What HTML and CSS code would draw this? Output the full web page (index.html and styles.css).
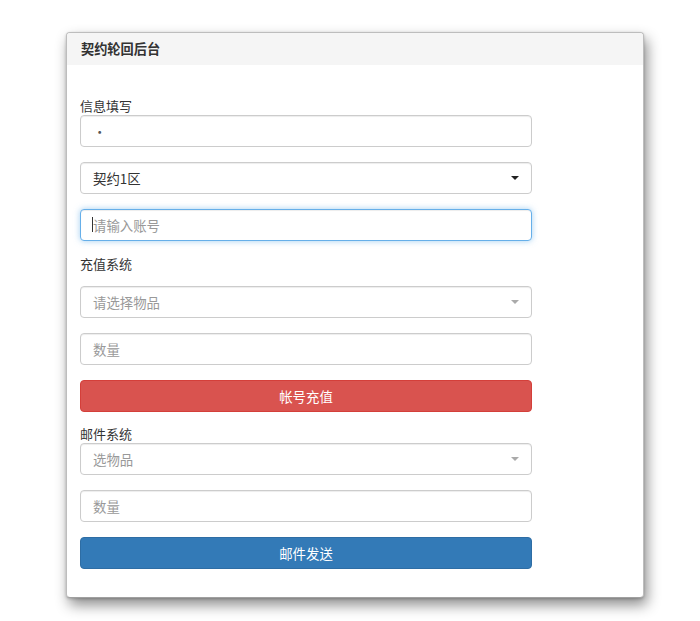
FILE: index.html
```html
<!DOCTYPE html>
<html lang="zh-CN">
<head>
<meta charset="utf-8">
<title>契约轮回后台</title>
<link rel="stylesheet" href="styles.css">
</head>
<body>
<div class="panel">
  <div class="panel-heading">契约轮回后台</div>
  <div class="panel-body">
    <form class="form">
      <div class="label label-first">信息填写</div>
      <input class="control gap" type="text" value="·">
      <div class="control select gap">
        <span class="sel-text">契约1区</span>
        <span class="caret dark"></span>
      </div>
      <div class="focus-wrap">
        <input class="control focused" type="text" placeholder="请输入账号">
        <span class="cursor"></span>
      </div>

      <div class="label label-mid">充值系统</div>
      <div class="control select gap">
        <span class="sel-text placeholder">请选择物品</span>
        <span class="caret"></span>
      </div>
      <input class="control gap" type="text" placeholder="数量">
      <button type="button" class="btn btn-danger">帐号充值</button>

      <div class="label label-last">邮件系统</div>
      <div class="control select gap">
        <span class="sel-text placeholder">选物品</span>
        <span class="caret"></span>
      </div>
      <input class="control gap" type="text" placeholder="数量">
      <button type="button" class="btn btn-primary">邮件发送</button>
    </form>
  </div>
</div>
</body>
</html>
```

FILE: styles.css
```css
* { box-sizing: border-box; }

html, body {
  margin: 0;
  padding: 0;
  background: #ffffff;
}

body {
  font-family: "Noto Sans CJK SC", "Noto Sans", "Liberation Sans", sans-serif;
  font-size: 13.4px;
  color: #333333;
  padding: 32px 0 23px 66px;
  min-height: 621px;
}

.panel {
  width: 578px;
  height: 566px;
  border: 1px solid #bdbdbd;
  border-bottom-color: #a0a0a0;
  border-radius: 4px;
  background: #ffffff;
  box-shadow: 3px 7px 14px rgba(0, 0, 0, 0.45), 0 1px 3px rgba(0, 0, 0, 0.2);
  overflow: hidden;
}

.panel-heading {
  height: 32px;
  line-height: 31px;
  padding-left: 14px;
  background: #f5f5f5;
  font-size: 13.2px;
  font-weight: 600;
  color: #333333;
}

.panel-body {
  padding: 32px 0 0 13px;
}

.form {
  width: 452px;
  display: flex;
  flex-direction: column;
}

.label {
  height: 18px;
  line-height: 17px;
  font-size: 13px;
  color: #333333;
}

.label-mid { margin-top: 14px; margin-bottom: 13px; }
.label-last { margin-top: 13px; }

.control {
  display: block;
  width: 452px;
  height: 32px;
  border: 1px solid #cccccc;
  border-radius: 4px;
  padding: 0 12px 1px;
  font-family: inherit;
  font-size: 13.4px;
  color: #555555;
  background: #ffffff;
  box-shadow: inset 0 1px 1px rgba(0, 0, 0, 0.075);
  outline: none;
}

.control::placeholder { color: #999999; }

.gap { margin-bottom: 15px; }

.select {
  display: flex;
  align-items: center;
  justify-content: space-between;
  padding-right: 12px;
}

.sel-text { color: #333333; }
.sel-text.placeholder { color: #999999; }

.caret {
  width: 0;
  height: 0;
  border-left: 4px solid transparent;
  border-right: 4px solid transparent;
  border-top: 4px solid #aaaaaa;
}

.caret.dark { border-top-color: #222222; }

.focus-wrap {
  position: relative;
}

.control.focused {
  border-color: #66afe9;
  box-shadow: inset 0 1px 1px rgba(0, 0, 0, 0.075), 0 0 6px rgba(102, 175, 233, 0.6);
}

.cursor {
  position: absolute;
  left: 12px;
  top: 8px;
  width: 1px;
  height: 15px;
  background: #333333;
}

.btn {
  display: block;
  width: 452px;
  height: 32px;
  border-radius: 4px;
  font-family: inherit;
  font-size: 13.4px;
  color: #ffffff;
  padding: 0 0 1px;
  cursor: pointer;
}

.btn-danger {
  background: #d9534f;
  border: 1px solid #d43f3a;
}

.btn-primary {
  background: #337ab7;
  border: 1px solid #2e6da4;
}
```
